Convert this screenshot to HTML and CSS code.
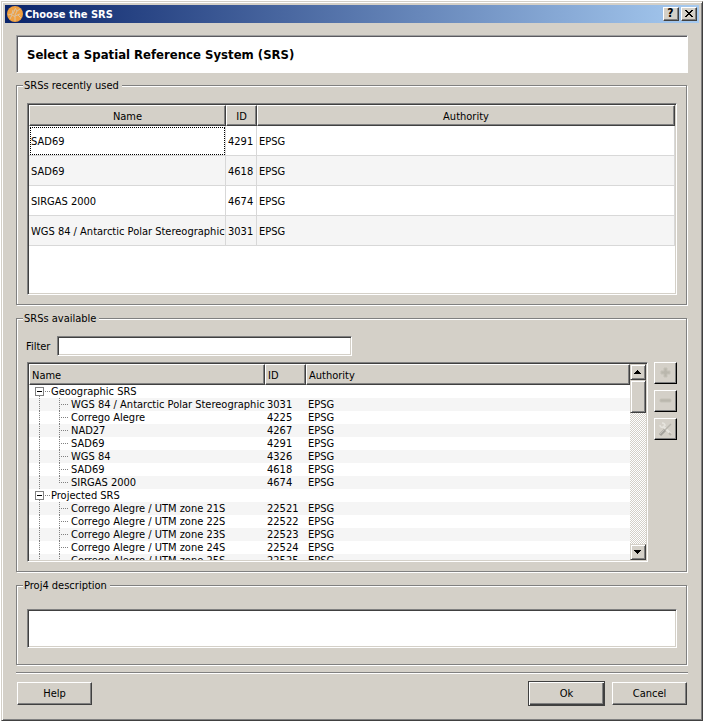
FILE: index.html
```html
<!DOCTYPE html>
<html lang="en">
<head>
<meta charset="utf-8">
<title>Choose the SRS</title>
<link rel="stylesheet" href="styles.css">
</head>
<body>
<main class="window">
  <header class="titlebar">
    <svg class="app-icon" viewBox="0 0 16 16" aria-hidden="true">
      <circle cx="8" cy="8" r="8" fill="#f0a040"/>
      <path d="M8 15V9M8 11L4 8M8 9l2-4M8 10l5-2M1 9l4-1 1-4M6 8l2-5M10 5l3-2M10 5L8 2M11 9l3 3M5 9l-2 4" fill="none" stroke="#d9c3a5" stroke-width="1"/>
    </svg>
    <h1 class="titlebar-text">Choose the SRS</h1>
    <button class="caption-button" type="button">?</button>
    <button class="caption-button" type="button" aria-label="Close">
      <svg width="8" height="7" viewBox="0 0 8 7" shape-rendering="crispEdges" aria-hidden="true"><path d="M0 0h2v1h1v1h2v-1h1v-1h2v1h-1v1h-1v1h-1v1h1v1h1v1h1v1h-2v-1h-1v-1h-2v1h-1v1h-2v-1h1v-1h1v-1h1v-1h-1v-1h-1v-1h-1z"/></svg>
    </button>
  </header>
  <div class="content">
    <h2 class="heading">Select a Spatial Reference System (SRS)</h2>

    <fieldset class="group">
      <legend>SRSs recently used</legend>
      <div class="sunken recent">
        <table class="recent-table">
          <colgroup><col class="recent-name"><col class="recent-id"><col></colgroup>
          <thead><tr><th>Name</th><th>ID</th><th>Authority</th></tr></thead>
          <tbody>
            <tr><td class="focused">SAD69</td><td>4291</td><td>EPSG</td></tr>
            <tr><td>SAD69</td><td>4618</td><td>EPSG</td></tr>
            <tr><td>SIRGAS 2000</td><td>4674</td><td>EPSG</td></tr>
            <tr><td>WGS 84 / Antarctic Polar Stereographic</td><td>3031</td><td>EPSG</td></tr>
          </tbody>
        </table>
      </div>
    </fieldset>

    <fieldset class="group">
      <legend>SRSs available</legend>
      <div class="filter">
        <label for="filter">Filter</label>
        <input class="sunken" id="filter" type="text">
      </div>
      <div class="available">
        <div class="sunken tree">
          <div class="tree-view">
            <table class="tree-table">
              <colgroup><col class="tree-name"><col class="tree-id"><col></colgroup>
              <thead><tr><th>Name</th><th>ID</th><th>Authority</th></tr></thead>
              <tbody>
                <tr><td><div class="node"><span class="guide root"><button class="expander" type="button" aria-label="Collapse Geoographic SRS"></button></span>Geoographic SRS</div></td><td></td><td></td></tr>
                <tr><td><div class="node"><span class="guide line"></span><span class="guide line leaf"></span>WGS 84 / Antarctic Polar Stereographic</div></td><td>3031</td><td>EPSG</td></tr>
                <tr><td><div class="node"><span class="guide line"></span><span class="guide line leaf"></span>Corrego Alegre</div></td><td>4225</td><td>EPSG</td></tr>
                <tr><td><div class="node"><span class="guide line"></span><span class="guide line leaf"></span>NAD27</div></td><td>4267</td><td>EPSG</td></tr>
                <tr><td><div class="node"><span class="guide line"></span><span class="guide line leaf"></span>SAD69</div></td><td>4291</td><td>EPSG</td></tr>
                <tr><td><div class="node"><span class="guide line"></span><span class="guide line leaf"></span>WGS 84</div></td><td>4326</td><td>EPSG</td></tr>
                <tr><td><div class="node"><span class="guide line"></span><span class="guide line leaf"></span>SAD69</div></td><td>4618</td><td>EPSG</td></tr>
                <tr><td><div class="node"><span class="guide line"></span><span class="guide line leaf last"></span>SIRGAS 2000</div></td><td>4674</td><td>EPSG</td></tr>
                <tr><td><div class="node"><span class="guide line root"><button class="expander" type="button" aria-label="Collapse Projected SRS"></button></span>Projected SRS</div></td><td></td><td></td></tr>
                <tr><td><div class="node"><span class="guide line"></span><span class="guide line leaf"></span>Corrego Alegre / UTM zone 21S</div></td><td>22521</td><td>EPSG</td></tr>
                <tr><td><div class="node"><span class="guide line"></span><span class="guide line leaf"></span>Corrego Alegre / UTM zone 22S</div></td><td>22522</td><td>EPSG</td></tr>
                <tr><td><div class="node"><span class="guide line"></span><span class="guide line leaf"></span>Corrego Alegre / UTM zone 23S</div></td><td>22523</td><td>EPSG</td></tr>
                <tr><td><div class="node"><span class="guide line"></span><span class="guide line leaf"></span>Corrego Alegre / UTM zone 24S</div></td><td>22524</td><td>EPSG</td></tr>
                <tr><td><div class="node"><span class="guide line"></span><span class="guide line leaf"></span>Corrego Alegre / UTM zone 25S</div></td><td>22525</td><td>EPSG</td></tr>
              </tbody>
            </table>
          </div>
          <div class="scrollbar">
            <button class="scroll-part" type="button" aria-label="Scroll up"><svg width="8" height="4" viewBox="0 0 8 4" shape-rendering="crispEdges" aria-hidden="true"><path d="M3 0h1v1h1v1h1v1h1v1H0V3h1V2h1V1h1z"/></svg></button>
            <div class="scroll-part thumb"></div>
            <div class="track"></div>
            <button class="scroll-part" type="button" aria-label="Scroll down"><svg width="8" height="4" viewBox="0 0 8 4" shape-rendering="crispEdges" aria-hidden="true"><path d="M0 0h7v1H6v1H5v1H4v1H3V3H2V2H1V1H0z"/></svg></button>
          </div>
        </div>
        <div class="tools">
          <button class="tool" type="button" disabled aria-label="Add">
            <svg width="16" height="16" viewBox="0 0 16 16" aria-hidden="true"><path d="M6 3h3v3h3v3h-3v3H6V9H3V6h3z" fill="#bab7ad" stroke="#c4c1b7"/></svg>
          </button>
          <button class="tool" type="button" disabled aria-label="Remove">
            <svg width="16" height="16" viewBox="0 0 16 16" aria-hidden="true"><rect x="2" y="6" width="11" height="3" rx="1" fill="#bab7ad" stroke="#c4c1b7"/></svg>
          </button>
          <button class="tool" type="button" disabled aria-label="Edit">
            <svg width="16" height="16" viewBox="0 0 16 16" aria-hidden="true">
              <path d="M5 5l8 8" stroke="#e6e4de" stroke-width="2" fill="none"/>
              <path d="M2 4c0 2 2 3 4 2M4 2c2 0 3 1 3 3" stroke="#e6e4de" stroke-width="1.5" fill="none"/>
              <path d="M11 12l2 2" stroke="#b9b6ad" stroke-width="2"/>
              <path d="M7 9l6-6" stroke="#b8b5ad" stroke-width="1.5"/>
              <path d="M2 14l5-5" stroke="#a3a19b" stroke-width="3"/>
              <path d="M2 13l4-4" stroke="#c3c1bb"/>
            </svg>
          </button>
        </div>
      </div>
    </fieldset>

    <fieldset class="group description">
      <legend id="proj-label">Proj4 description</legend>
      <textarea class="sunken" aria-labelledby="proj-label"></textarea>
    </fieldset>

    <hr class="separator">
    <footer class="actions">
      <button class="action help" type="button">Help</button>
      <button class="action default" type="button">Ok</button>
      <button class="action" type="button">Cancel</button>
    </footer>
  </div>
</main>
</body>
</html>
```
FILE: styles.css
```css
:root {
  --face: #d4d0c8;
  --shadow: #808080;
  --dark: #404040;
  --light: #fff;
  --stripe: #f5f5f5;
}

* { box-sizing: border-box; }

body {
  margin: 0;
  padding: 1px;
  background: #fff;
  color: #000;
  font: 11px/13px "DejaVu Sans Condensed", "DejaVu Sans", sans-serif;
}

button, input, textarea { font: inherit; color: inherit; border-radius: 0; }

.window {
  padding: 3px;
  background: var(--face);
  border: 1px solid;
  border-color: var(--face) var(--dark) var(--dark) var(--face);
  box-shadow: inset 1px 1px 0 var(--light), inset -1px -1px 0 var(--shadow);
}

/* Title bar */
.titlebar {
  display: flex;
  align-items: center;
  gap: 2px;
  height: 18px;
  padding: 0 2px;
  background: linear-gradient(to right, #0a246a, #a6caf0);
}
.app-icon { width: 16px; height: 16px; }
.titlebar-text { flex: 1; margin: 0; color: #fff; font-size: 11px; line-height: 13px; font-weight: bold; }
.caption-button {
  display: flex;
  align-items: center;
  justify-content: center;
  width: 16px;
  height: 14px;
  padding: 0 1px 1px 0;
  border: 1px solid;
  border-color: var(--light) var(--dark) var(--dark) var(--light);
  box-shadow: inset -1px -1px 0 var(--shadow);
  background: var(--face);
  font-size: 12px;
  font-weight: bold;
}

.content { padding: 12px 11px 11px; }

.heading {
  display: flex;
  align-items: center;
  height: 38px;
  margin: 0 0 6px;
  padding: 1px 9px 0 10px;
  background: #fff;
  border: 1px solid;
  border-color: #a0a0a0 #fff #fff #a0a0a0;
  box-shadow: inset 1px 1px 0 #5a5a5f;
  font-size: 13px;
  line-height: 16px;
}

/* Etched group boxes */
.group {
  min-width: 0;
  margin: 0 1px 7px 0;
  padding: 11px 9px 9px 10px;
  border: 1px solid var(--shadow);
  box-shadow: 1px 1px 0 var(--light), inset 1px 1px 0 var(--light);
}
.group legend {
  height: 13px;
  margin-left: -4px;
  padding: 0 3px 0 1px;
  background: var(--face);
}

.sunken {
  border: 1px solid;
  border-color: var(--shadow) var(--light) var(--light) var(--shadow);
  box-shadow: inset 1px 1px 0 var(--dark), inset -1px -1px 0 var(--face);
  padding: 1px;
  background: #fff;
}

table {
  width: 100%;
  border-collapse: separate;
  border-spacing: 0;
  table-layout: fixed;
}
th {
  height: 21px;
  padding: 2px 2px 0;
  font-weight: normal;
  white-space: nowrap;
  background: var(--face);
  border: 1px solid;
  border-color: var(--light) var(--dark) var(--dark) var(--light);
  box-shadow: inset -1px -1px 0 var(--shadow);
}
td { white-space: nowrap; }

.recent { height: 192px; }
.recent-name { width: 197px; }
.recent-id { width: 31px; }
.recent-table td {
  height: 30px;
  padding: 2px 2px 0;
  border: 0 solid #d8d8d8;
  border-width: 0 1px 1px 0;
}
.recent-table tr:nth-child(even) td { background: var(--stripe); }
.recent-table .focused { outline: 1px dotted #000; outline-offset: -2px; }

.filter { display: flex; align-items: center; gap: 7px; margin-bottom: 6px; }
.filter label { margin-left: -1px; }
.filter input { width: 295px; height: 20px; padding: 2px 4px; outline: 0; }

.available { display: flex; align-items: flex-start; gap: 6px; }
.tree { display: flex; flex: 1; min-width: 0; height: 200px; }
.tree-view { flex: 1; min-width: 0; overflow: hidden; }
.tree-name { width: 236px; }
.tree-id { width: 41px; }
.tree-table th { text-align: left; }
.tree-table td { height: 13px; padding: 0 2px; }
.tree-table td:first-child { padding-right: 0; }
.tree-table tr:nth-child(even) td { background: var(--stripe); }
.node { display: flex; }

/* Dotted connectors between tree nodes */
.guide {
  --dots-x: repeating-linear-gradient(to right, #808080 0 1px, transparent 1px 2px);
  --dots-y: repeating-linear-gradient(to bottom, #808080 0 1px, transparent 1px 2px);
  flex: none;
  width: 20px;
  height: 13px;
  background-repeat: no-repeat;
}
.line { background-image: var(--dots-y); background-position: 8px 0; background-size: 1px 13px; }
.leaf { background-image: var(--dots-y), var(--dots-x); background-position: 8px 0, 8px 6px; background-size: 1px 13px, 10px 1px; }
.last { background-size: 1px 7px, 10px 1px; }
.root { padding: 2px 0 2px 4px; background-image: var(--dots-y), var(--dots-x); background-position: 8px 11px, 8px 6px; background-size: 1px 2px, 11px 1px; }
.expander {
  display: block;
  width: 9px;
  height: 9px;
  padding: 0;
  border: 1px solid var(--shadow);
  background: linear-gradient(#000, #000) center / 5px 1px no-repeat #fff;
}

.scrollbar { display: flex; flex-direction: column; width: 16px; }
.scroll-part {
  display: flex;
  align-items: center;
  justify-content: center;
  flex: none;
  width: 16px;
  height: 16px;
  padding: 0;
  background: var(--face);
  border: 1px solid;
  border-color: var(--face) var(--dark) var(--dark) var(--face);
  box-shadow: inset 1px 1px 0 var(--light), inset -1px -1px 0 var(--shadow);
}
.thumb { height: 33px; }
.track { flex: 1; background: repeating-conic-gradient(#fff 0 25%, var(--face) 0 50%) 0 0 / 2px 2px; }

.tools { display: flex; flex-direction: column; gap: 6px; }
.tool {
  display: flex;
  align-items: center;
  justify-content: center;
  width: 23px;
  height: 22px;
  padding: 0;
  background: var(--face);
  border: 1px solid;
  border-color: var(--light) #000 #000 var(--light);
  box-shadow: inset -1px -1px 0 var(--shadow);
}

.description { padding-top: 17px; padding-bottom: 16px; }
.description textarea { display: block; width: 100%; height: 39px; resize: none; outline: 0; }

.separator { height: 2px; margin: 0 0 7px; border: 0; border-top: 1px solid var(--shadow); background: var(--light); }

.actions { display: flex; align-items: center; gap: 7px; padding: 0 1px; }
.action {
  width: 75px;
  height: 23px;
  padding: 0;
  background: var(--face);
  border: 1px solid;
  border-color: var(--light) var(--dark) var(--dark) var(--light);
  box-shadow: inset -1px -1px 0 var(--shadow);
}
.help { margin-right: auto; }
.default {
  width: 77px;
  height: 25px;
  border-color: var(--dark);
  box-shadow: inset 1px 1px 0 var(--light), inset -1px -1px 0 var(--dark), inset -2px -2px 0 var(--shadow);
}
```
